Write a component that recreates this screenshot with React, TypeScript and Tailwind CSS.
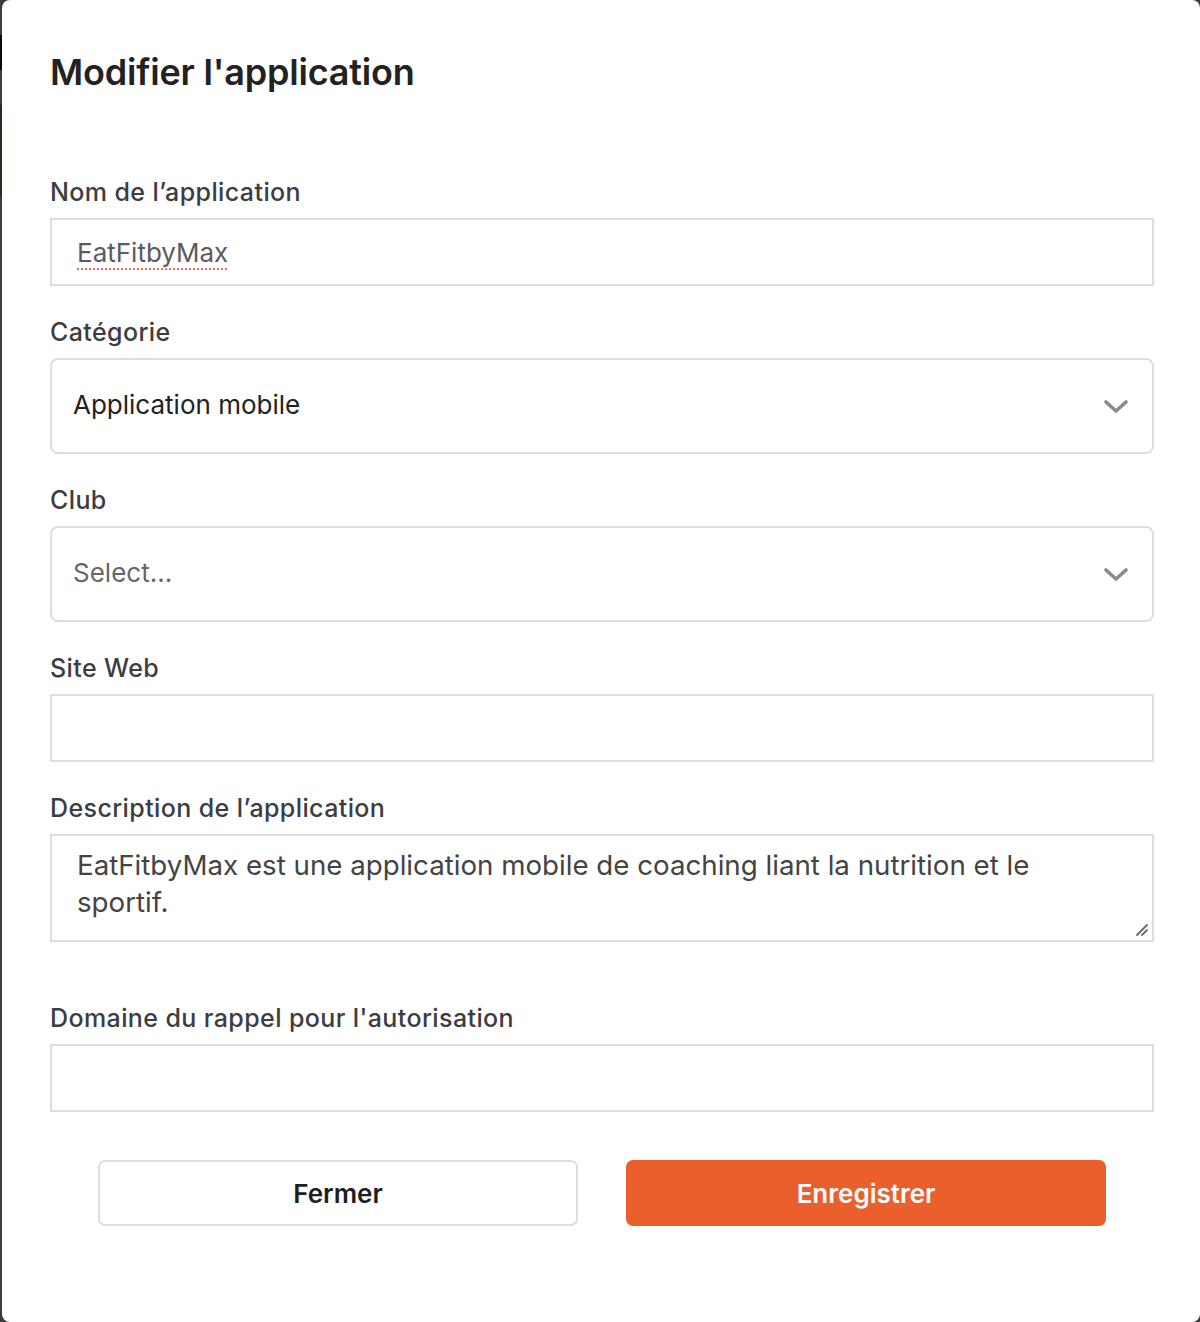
import React from "react";

function Chevron() {
  return (
    <svg width="26" height="16" viewBox="0 0 26 16" className="shrink-0 mt-[2px]">
      <polyline points="3,3 13,12 23,3" fill="none" stroke="#8a8a86" strokeWidth="3.6" strokeLinecap="round" strokeLinejoin="round" />
    </svg>
  );
}

function Label({ children, className = "" }: { children: React.ReactNode; className?: string }) {
  return (
    <label className={"block text-[25px] leading-[32px] font-medium tracking-[0.4px] text-[#3c3c43] " + className}>{children}</label>
  );
}

export default function App() {
  return (
    <div className="min-h-[1322px] w-[1200px] bg-[#3b3b3b] flex" style={{ fontFamily: "Inter, 'Noto Sans', sans-serif" }}>
      <div className="w-[2px] shrink-0 flex flex-col">
        <div className="h-[35px]"></div>
        <div className="h-[35px] bg-[#0a0a0a]"></div>
        <div className="h-[35px]"></div>
        <div className="h-[90px] bg-[#1f2f19]"></div>
      </div>
      <div className="flex-1 h-[1322px] bg-white rounded-[8px] pl-[48px] pr-[46px] pt-[50px]">
        <h1 className="text-[36px] leading-[44px] font-semibold text-[#222222] tracking-[-0.2px]">Modifier l'application</h1>

        <div className="mt-[82px]">
          <Label>Nom de l’application</Label>
          <div className="mt-[10px] h-[68px] border-2 border-[#dcdce3] flex items-center px-[25px]">
            <span className="text-[26px] text-[#5b5b5f] underline decoration-dotted decoration-[#f06b5f] decoration-2 underline-offset-[7px]">EatFitbyMax</span>
          </div>
        </div>

        <div className="mt-[30px]">
          <Label>Catégorie</Label>
          <div className="mt-[10px] h-[96px] border-2 border-[#dddddd] rounded-[8px] flex items-center justify-between pl-[21px] pr-[23px]">
            <span className="text-[26px] text-[#222222] -mt-[3px]">Application mobile</span>
            <Chevron />
          </div>
        </div>

        <div className="mt-[30px]">
          <Label>Club</Label>
          <div className="mt-[10px] h-[96px] border-2 border-[#dddddd] rounded-[8px] flex items-center justify-between pl-[21px] pr-[23px]">
            <span className="text-[26px] text-[#666666] -mt-[3px]">Select...</span>
            <Chevron />
          </div>
        </div>

        <div className="mt-[30px]">
          <Label>Site Web</Label>
          <div className="mt-[10px] h-[68px] border-2 border-[#dcdce3]"></div>
        </div>

        <div className="mt-[30px]">
          <Label>Description de l’application</Label>
          <div className="relative mt-[10px] h-[108px] border-2 border-[#dddddd] pl-[25px] pr-[60px] pt-[11px]">
            <p className="text-[27.7px] leading-[37px] text-[#444444]">
              EatFitbyMax est une application mobile de coaching liant la nutrition et le
              <br />
              sportif.
            </p>
            <svg className="absolute right-[3px] bottom-[3px]" width="14" height="14" viewBox="0 0 14 14">
              <line x1="2" y1="12" x2="12" y2="2" stroke="#666" strokeWidth="1.8" strokeLinecap="round" />
              <line x1="7" y1="12" x2="12" y2="7" stroke="#666" strokeWidth="1.8" strokeLinecap="round" />
            </svg>
          </div>
        </div>

        <div className="mt-[60px]">
          <Label>Domaine du rappel pour l'autorisation</Label>
          <div className="mt-[10px] h-[68px] border-2 border-[#dcdce3]"></div>
        </div>

        <div className="mt-[48px] flex gap-[48px] px-[48px]">
          <button className="w-[480px] h-[66px] border-2 border-[#dddddd] rounded-[7px] bg-white text-[26px] font-semibold text-[#1e1e1e]">Fermer</button>
          <button className="w-[480px] h-[66px] rounded-[7px] bg-[#eb5f2d] text-[26px] font-semibold text-white">Enregistrer</button>
        </div>
      </div>
    </div>
  );
}
